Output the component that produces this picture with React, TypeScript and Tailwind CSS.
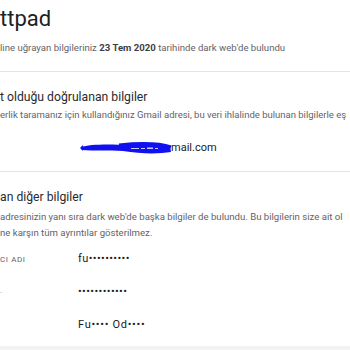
import React from "react";

const font = { fontFamily: "Roboto, 'Noto Sans', Arial, sans-serif" };

function Scribble() {
  return (
    <svg width="94" height="16" viewBox="0 0 94 16" className="block">
      <path
        d="M2 7 C 10 4, 30 4, 50 5 C 62 5, 78 4, 91 6 L 92 12 C 80 14, 62 14, 44 11 C 30 10, 14 11, 3 10 Z"
        fill="#1010f0"
      />
      <path d="M1 8 L 4 5 L 4 11 Z" fill="#1010f0" />
      <path d="M40 5 C 60 3, 80 3, 92 7" stroke="#1010f0" strokeWidth="3" fill="none" />
      <g fill="#c8c8ff">
        <rect x="52" y="8" width="8" height="1" />
        <rect x="62" y="8" width="4" height="1" />
        <rect x="68" y="7.5" width="6" height="1.5" />
        <rect x="76" y="8" width="3" height="1" />
      </g>
    </svg>
  );
}

export default function App() {
  return (
    <div className="w-[350px] h-[350px] overflow-hidden bg-white flex flex-col" style={font}>
      <div className="h-[71px] flex flex-col shrink-0">
        <div className="pt-[4px] h-[36px] text-[22px] leading-[30px] text-[#202124]">ttpad</div>
        <div className="pt-[4px] text-[9.6px] leading-[16px] text-[#5f6368] whitespace-nowrap">
          line uğrayan bilgileriniz <span className="font-bold text-[#3c4043]">23 Tem 2020</span> tarihinde dark web'de bulundu
        </div>
      </div>
      <div className="h-px bg-[#e3e3e3] shrink-0" />
      <div className="h-[99px] flex flex-col shrink-0">
        <div className="pt-[16px] text-[12.2px] leading-[18px] text-[#2a2b2e] whitespace-nowrap">
          t olduğu doğrulanan bilgiler
        </div>
        <div className="pt-[2px] text-[9.5px] leading-[14px] text-[#5f6368] whitespace-nowrap">
          erlik taramanız için kullandığınız Gmail adresi, bu veri ihlalinde bulunan bilgilerle eş
        </div>
        <div className="pt-[18px] flex items-center pl-[79px]">
          <Scribble />
          <span className="-ml-[2px] text-[11px] leading-[16px] text-[#202124]">mail.com</span>
        </div>
      </div>
      <div className="h-px bg-[#e3e3e3] shrink-0" />
      <div className="flex flex-col grow">
        <div className="pt-[16px] text-[12.2px] leading-[18px] text-[#2a2b2e] whitespace-nowrap">
          an diğer bilgiler
        </div>
        <div className="pt-[3px] text-[9.6px] leading-[16px] text-[#5f6368] whitespace-nowrap">
          <div>adresinizin yanı sıra dark web'de başka bilgiler de bulundu. Bu bilgilerin size ait ol</div>
          <div>ne karşın tüm ayrıntılar gösterilmez.</div>
        </div>
        <div className="pt-[2px] flex flex-col">
          <div className="h-[33px] flex items-center">
            <div className="w-[78px] text-[8px] tracking-[0.6px] text-[#5f6368]">CI ADI</div>
            <div className="text-[11px] text-[#202124] tracking-[0.4px]">fu••••••••••</div>
          </div>
          <div className="h-[33px] flex items-center">
            <div className="w-[78px] text-[8px] text-[#b0b4b8] leading-none">-</div>
            <div className="text-[11px] text-[#202124] tracking-[0.4px]">••••••••••••</div>
          </div>
          <div className="h-[33px] flex items-center">
            <div className="w-[78px]" />
            <div className="text-[11px] text-[#202124] tracking-[0.7px]">Fu•••• Od••••</div>
          </div>
        </div>
      </div>
      <div className="h-[4px] bg-[#f1f3f4] shrink-0" />
    </div>
  );
}
